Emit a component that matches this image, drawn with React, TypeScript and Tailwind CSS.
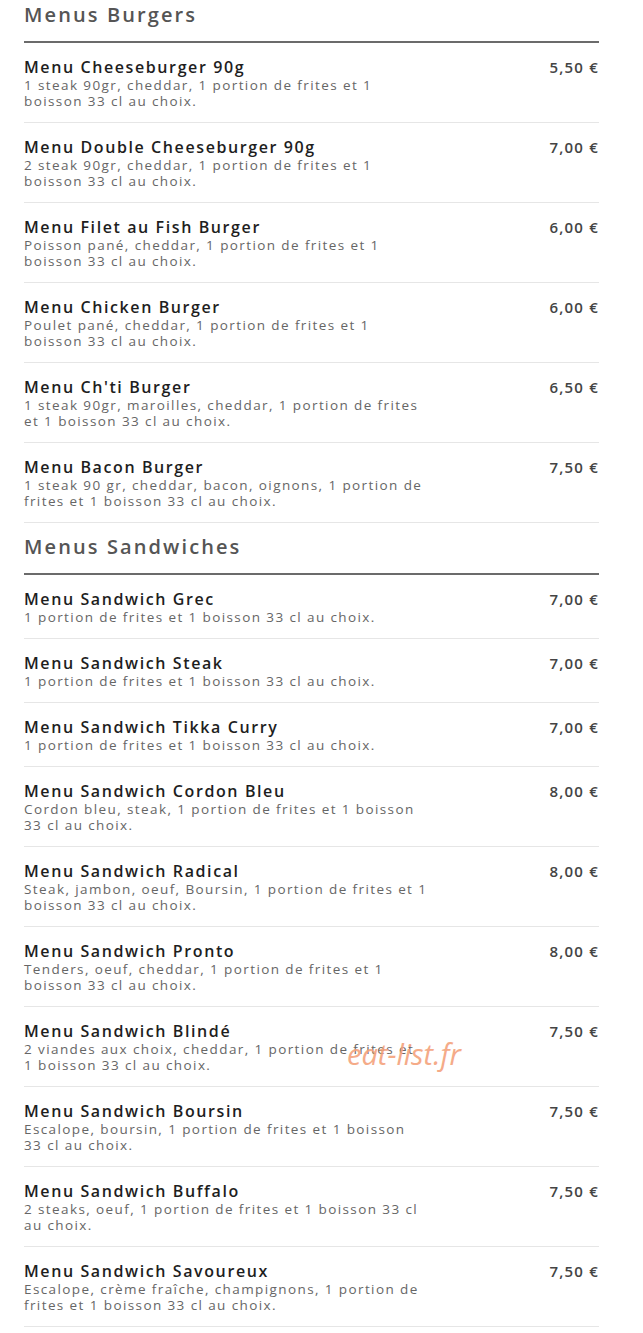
import React from 'react';

type Item = { name: string; desc: string; price: string };

const burgers: Item[] = [
  { name: 'Menu Cheeseburger 90g', desc: '1 steak 90gr, cheddar, 1 portion de frites et 1 boisson 33 cl au choix.', price: '5,50 €' },
  { name: 'Menu Double Cheeseburger 90g', desc: '2 steak 90gr, cheddar, 1 portion de frites et 1 boisson 33 cl au choix.', price: '7,00 €' },
  { name: 'Menu Filet au Fish Burger', desc: 'Poisson pané, cheddar, 1 portion de frites et 1 boisson 33 cl au choix.', price: '6,00 €' },
  { name: 'Menu Chicken Burger', desc: 'Poulet pané, cheddar, 1 portion de frites et 1 boisson 33 cl au choix.', price: '6,00 €' },
  { name: "Menu Ch'ti Burger", desc: '1 steak 90gr, maroilles, cheddar, 1 portion de frites et 1 boisson 33 cl au choix.', price: '6,50 €' },
  { name: 'Menu Bacon Burger', desc: '1 steak 90 gr, cheddar, bacon, oignons, 1 portion de frites et 1 boisson 33 cl au choix.', price: '7,50 €' },
];

const sandwiches: Item[] = [
  { name: 'Menu Sandwich Grec', desc: '1 portion de frites et 1 boisson 33 cl au choix.', price: '7,00 €' },
  { name: 'Menu Sandwich Steak', desc: '1 portion de frites et 1 boisson 33 cl au choix.', price: '7,00 €' },
  { name: 'Menu Sandwich Tikka Curry', desc: '1 portion de frites et 1 boisson 33 cl au choix.', price: '7,00 €' },
  { name: 'Menu Sandwich Cordon Bleu', desc: 'Cordon bleu, steak, 1 portion de frites et 1 boisson 33 cl au choix.', price: '8,00 €' },
  { name: 'Menu Sandwich Radical', desc: 'Steak, jambon, oeuf, Boursin, 1 portion de frites et 1 boisson 33 cl au choix.', price: '8,00 €' },
  { name: 'Menu Sandwich Pronto', desc: 'Tenders, oeuf, cheddar, 1 portion de frites et 1 boisson 33 cl au choix.', price: '8,00 €' },
  { name: 'Menu Sandwich Blindé', desc: '2 viandes aux choix, cheddar, 1 portion de frites et 1\u00a0boisson 33 cl au choix.', price: '7,50 €' },
  { name: 'Menu Sandwich Boursin', desc: 'Escalope, boursin, 1 portion de frites et 1 boisson 33\u00a0cl au choix.', price: '7,50 €' },
  { name: 'Menu Sandwich Buffalo', desc: '2 steaks, oeuf, 1 portion de frites et 1 boisson 33 cl au choix.', price: '7,50 €' },
  { name: 'Menu Sandwich Savoureux', desc: 'Escalope, crème fraîche, champignons, 1 portion de frites et 1 boisson 33 cl au choix.', price: '7,50 €' },
];

const Row = ({ item }: { item: Item }) => (
  <div className="flex justify-between border-b border-[#e6e6e6] pt-[14px] pb-[13px]">
    <div className="w-[405px]">
      <div className="text-[16px] leading-[20px] font-semibold tracking-[1.6px] text-[#1e1e1e]">{item.name}</div>
      <div className="text-[13.5px] leading-[16px] tracking-[1.4px] text-[#666]">{item.desc}</div>
    </div>
    <div className="text-[15px] leading-[20px] font-semibold tracking-[1.2px] text-[#444]">{item.price}</div>
  </div>
);

const Section = ({ title, items, first }: { title: string; items: Item[]; first?: boolean }) => (
  <div>
    <h2
      className={`${first ? 'pt-[3px] pb-[14px]' : 'pt-[12px] pb-[14px]'} text-[20px] leading-[24px] font-semibold tracking-[2.1px] text-[#555] border-b-2 border-[#6b6b6b]`}
    >
      {title}
    </h2>
    {items.map((it) => (
      <Row key={it.name} item={it} />
    ))}
  </div>
);

export default function App() {
  return (
    <div className="relative w-[643px] bg-white pl-[24px] pr-[44px]" style={{ fontFamily: '"Open Sans", sans-serif' }}>
      <Section title="Menus Burgers" items={burgers} first />
      <Section title="Menus Sandwiches" items={sandwiches} />
      <div className="absolute left-[347px] top-[1034px] text-[29px] leading-[40px] italic text-[#f4a27c] opacity-90 pointer-events-none">
        eat-list.fr
      </div>
    </div>
  );
}
